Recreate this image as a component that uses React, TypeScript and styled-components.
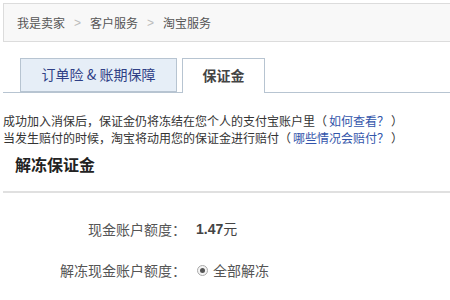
import React from "react";
import styled, { createGlobalStyle } from "styled-components";

const Global = createGlobalStyle`
  html, body { margin: 0; padding: 0; background: #fff; }
  body {
    font-family: "Microsoft YaHei", "Noto Sans CJK SC", "Liberation Sans", sans-serif;
    font-size: 12px;
    color: #333;
  }
`;

const Page = styled.div`
  padding: 3px 0 0 3px;
  overflow: hidden;
  width: 447px;
`;

const Breadcrumb = styled.div`
  height: 37px;
  border: 1px solid #dcdcdc;
  border-right: none;
  background: #f8f8f8;
  display: flex;
  align-items: center;
  padding-left: 13px;
  gap: 9px;
  color: #555;
  font-size: 12px;
`;

const Sep = styled.span`
  color: #bbb;
  font-family: "Liberation Sans", sans-serif;
`;

const TabBar = styled.div`
  margin-top: 16px;
  display: flex;
  gap: 5px;
  padding-left: 17px;
  border-bottom: 1px solid #b7c4d1;
  height: 34px;
  align-items: flex-end;
`;

const Tab = styled.div<{ $active?: boolean }>`
  box-sizing: border-box;
  width: ${(p) => (p.$active ? "83px" : "157px")};
  height: ${(p) => (p.$active ? "35px" : "34px")};
  margin-bottom: ${(p) => (p.$active ? "-1px" : "0")};
  border: 1px solid #b7c4d1;
  border-bottom: ${(p) => (p.$active ? "none" : "1px solid #b7c4d1")};
  background: ${(p) => (p.$active ? "#fff" : "#e6eef7")};
  color: ${(p) => (p.$active ? "#444" : "#2f3f86")};
  font-size: 14px;
  font-weight: ${(p) => (p.$active ? 600 : 400)};
  display: flex;
  align-items: center;
  justify-content: center;
  padding-bottom: 2px;
`;

const Notice = styled.div`
  margin-top: 19px;
  line-height: 17px;
  font-size: 12px;
  color: #333;
`;

const Link = styled.a`
  color: #3355aa;
  text-decoration: none;
  padding: 0 2px;
`;

const Heading = styled.h2`
  margin: 6px 0 0 12px;
  font-size: 16px;
  font-weight: 700;
  color: #222;
  line-height: 24px;
`;

const Rule = styled.div`
  margin-top: 15px;
  height: 2px;
  background: #e0e0e0;
`;

const Form = styled.div`
  margin-top: 26px;
  display: grid;
  grid-template-columns: 183px auto;
  row-gap: 22px;
  column-gap: 10px;
  align-items: center;
  font-size: 14px;
`;

const Label = styled.div`
  text-align: right;
  color: #555;
  line-height: 19px;
`;

const Value = styled.div`
  color: #555;
  line-height: 19px;
  display: flex;
  align-items: center;
  gap: 5px;
`;

const Amount = styled.span`
  color: #444;
`;

const Num = styled.b`
  font-family: "Liberation Sans", sans-serif;
  font-size: 14px;
  font-weight: 700;
`;

const Radio = styled.span`
  box-sizing: border-box;
  width: 11px;
  height: 11px;
  margin-left: 1px;
  border: 1px solid #aaa;
  border-radius: 50%;
  background: #f4f4f4;
  display: inline-flex;
  align-items: center;
  justify-content: center;
  &::after {
    content: "";
    width: 5px;
    height: 5px;
    border-radius: 50%;
    background: #555;
  }
`;

export default function App() {
  return (
    <>
      <Global />
      <Page>
        <Breadcrumb>
          <span>我是卖家</span>
          <Sep>&gt;</Sep>
          <span>客户服务</span>
          <Sep>&gt;</Sep>
          <span>淘宝服务</span>
        </Breadcrumb>
        <TabBar>
          <Tab>订单险 &amp; 账期保障</Tab>
          <Tab $active>保证金</Tab>
        </TabBar>
        <Notice>
          <div>
            成功加入消保后，保证金仍将冻结在您个人的支付宝账户里（<Link href="#">如何查看？</Link>）
          </div>
          <div>
            当发生赔付的时候，淘宝将动用您的保证金进行赔付（<Link href="#">哪些情况会赔付？</Link>）
          </div>
        </Notice>
        <Heading>解冻保证金</Heading>
        <Rule />
        <Form>
          <Label>现金账户额度：</Label>
          <Value>
            <Amount>
              <Num>1.47</Num>元
            </Amount>
          </Value>
          <Label>解冻现金账户额度：</Label>
          <Value>
            <Radio />
            全部解冻
          </Value>
        </Form>
      </Page>
    </>
  );
}
